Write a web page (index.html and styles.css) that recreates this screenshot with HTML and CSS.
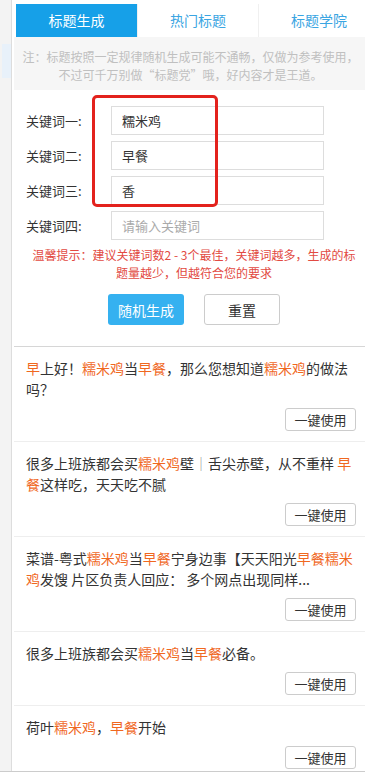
FILE: index.html
```html
<!DOCTYPE html>
<html lang="zh-CN">
<head>
    <meta charset="UTF-8">
    <meta name="viewport" content="width=device-width, initial-scale=1.0">
    <title>标题生成</title>
    <link rel="stylesheet" href="styles.css">
</head>
<body>
    <div class="page">
        <div class="side">
            <div class="side-mark"></div>
        </div>
        <div class="main">
            <div class="tabs">
                <div class="tab active">标题生成</div>
                <div class="tab">热门标题</div>
                <div class="tab">标题学院</div>
            </div>

            <div class="notice">注：标题按照一定规律随机生成可能不通畅，仅做为参考使用，不过可千万别做“标题党”哦，好内容才是王道。</div>

            <div class="form">
                <div class="row">
                    <label>关键词一:</label>
                    <input type="text" value="糯米鸡">
                </div>
                <div class="row">
                    <label>关键词二:</label>
                    <input type="text" value="早餐">
                </div>
                <div class="row">
                    <label>关键词三:</label>
                    <input type="text" value="香">
                </div>
                <div class="row">
                    <label>关键词四:</label>
                    <input type="text" placeholder="请输入关键词">
                </div>
                <div class="tip">温馨提示：建议关键词数2 - 3个最佳，关键词越多，生成的标题量越少，但越符合您的要求</div>
                <div class="form-buttons">
                    <button class="gen-btn">随机生成</button>
                    <button class="reset-btn">重置</button>
                </div>
                <!-- 标注框 -->
                <div class="mark-box"></div>
            </div>

            <div class="result-list">
                <div class="result-item">
                    <div class="result-text"><em>早</em>上好！<em>糯米鸡</em>当<em>早餐</em>，那么您想知道<em>糯米鸡</em>的做法吗？</div>
                    <div class="use-row"><button class="use-btn">一键使用</button></div>
                </div>
                <div class="result-item">
                    <div class="result-text">很多上班族都会买<em>糯米鸡</em>壁<span class="bar">｜</span>舌尖赤壁，从不重样 <em>早餐</em>这样吃，天天吃不腻</div>
                    <div class="use-row"><button class="use-btn">一键使用</button></div>
                </div>
                <div class="result-item">
                    <div class="result-text">菜谱-粤式<em>糯米鸡</em>当<em>早餐</em>宁身边事【天天阳光<em>早餐糯米鸡</em>发馊 片区负责人回应： 多个网点出现同样...</div>
                    <div class="use-row"><button class="use-btn">一键使用</button></div>
                </div>
                <div class="result-item">
                    <div class="result-text">很多上班族都会买<em>糯米鸡</em>当<em>早餐</em>必备。</div>
                    <div class="use-row"><button class="use-btn">一键使用</button></div>
                </div>
                <div class="result-item">
                    <div class="result-text">荷叶<em>糯米鸡</em>，<em>早餐</em>开始</div>
                    <div class="use-row"><button class="use-btn">一键使用</button></div>
                </div>
            </div>
        </div>
    </div>
</body>
</html>
```

FILE: styles.css
```css
body {
    margin: 0;
    background-color: #fff;
    font-family: "Noto Sans CJK SC", "Liberation Sans", sans-serif;
    color: #333;
}
.page {
    display: flex;
    height: 771px;
    overflow: hidden;
    border-bottom: 1px solid #ccc;
}
.side {
    width: 9px;
    padding-left: 2px;
    background-color: #f3f3f3;
    border-right: 1px solid #ddd;
    flex-shrink: 0;
}
.side-mark {
    margin-top: 44px;
    height: 34px;
    background-color: #e8f1fa;
}
.main {
    flex: 1;
    min-width: 0;
    margin-left: 2px;
    background-color: #fff;
}
.tabs {
    display: flex;
    padding: 4px 0 0 2px;
    overflow: hidden;
    background-color: #fff;
}
.tab {
    flex: 0 0 121px;
    height: 33px;
    line-height: 33px;
    text-align: center;
    font-size: 14px;
    color: #3aa5e2;
    border-left: 1px solid #f0f0f0;
    box-sizing: border-box;
}
.tab.active {
    background-color: #16a0e8;
    color: #fff;
    border-left: none;
}
.notice {
    background-color: #f6f6f6;
    padding: 11px 4px 6px 6px;
    font-size: 12px;
    line-height: 18px;
    color: #c0c0c0;
    text-align: center;
}
.form {
    position: relative;
    padding: 16px 0 21px 12px;
    border-bottom: 1px solid #d6d6d6;
}
.row {
    display: flex;
    align-items: center;
    margin-bottom: 6px;
}
.row label {
    width: 85px;
    font-size: 13px;
    color: #333;
}
.row input {
    width: 213px;
    height: 29px;
    padding: 0 10px;
    border: 1px solid #ddd;
    box-sizing: border-box;
    font-family: inherit;
    font-size: 13px;
    color: #333;
    outline: none;
}
.row input::placeholder {
    color: #aaa;
}
.tip {
    width: 330px;
    margin-left: 3px;
    font-size: 12px;
    line-height: 18px;
    color: #e24a42;
    text-align: center;
}
.form-buttons {
    display: flex;
    justify-content: center;
    gap: 20px;
    margin-top: 12px;
    padding-right: 3px;
}
.form-buttons button {
    width: 76px;
    height: 31px;
    border-radius: 3px;
    font-family: inherit;
    font-size: 14px;
    cursor: pointer;
}
.gen-btn {
    background-color: #35b1f0;
    color: #fff;
    border: none;
}
.reset-btn {
    background-color: #fff;
    color: #333;
    border: 1px solid #ccc;
}
.mark-box {
    position: absolute;
    left: 78px;
    top: 5px;
    width: 126px;
    height: 112px;
    border: 3px solid #e3221d;
    border-radius: 5px;
    box-sizing: border-box;
}
.result-item {
    padding: 11px 9px 10px 12px;
    border-bottom: 1px solid #eee;
}
.result-text {
    font-size: 14px;
    line-height: 21px;
    color: #333;
}
.result-text em {
    font-style: normal;
    color: #f0681f;
}
.result-text .bar {
    color: #999;
}
.use-row {
    display: flex;
    justify-content: flex-end;
    margin-top: 8px;
}
.use-btn {
    width: 71px;
    height: 23px;
    padding: 0;
    background-color: #fff;
    border: 1px solid #ccc;
    border-radius: 3px;
    font-family: inherit;
    font-size: 13px;
    color: #333;
    cursor: pointer;
}
```
